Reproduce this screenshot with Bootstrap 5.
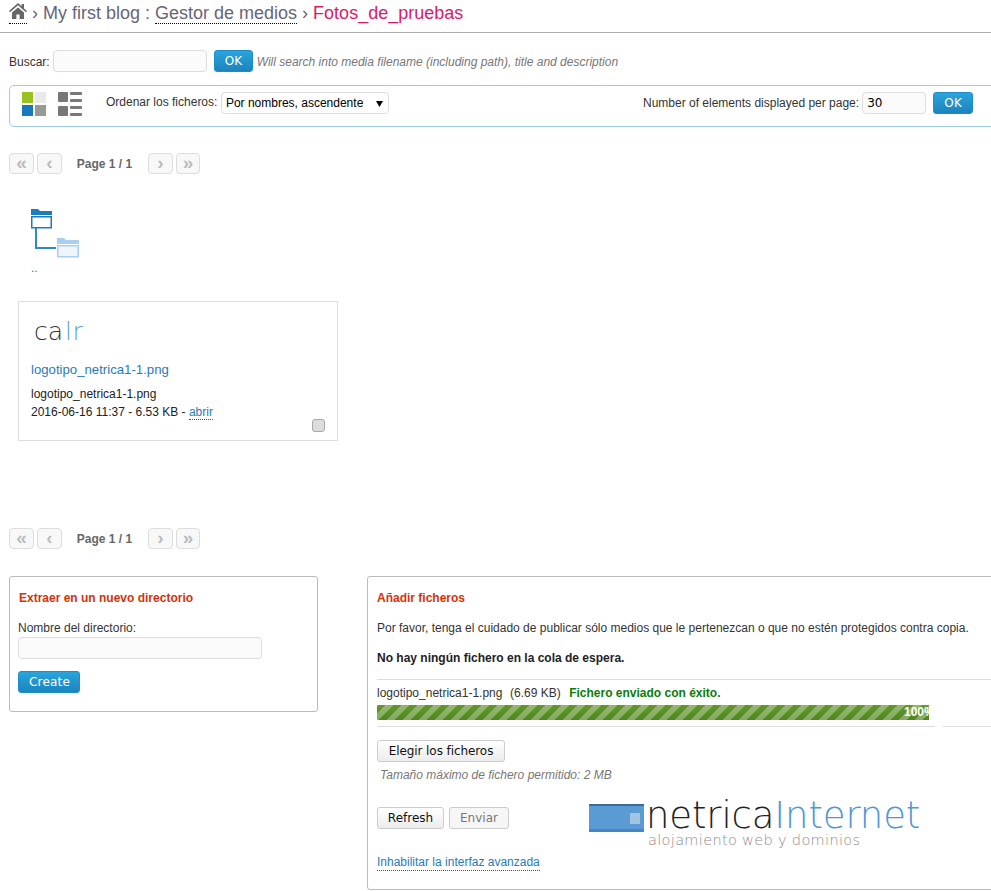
<!DOCTYPE html>
<html lang="es"><head><meta charset="utf-8"><title>Gestor de medios</title>
<link rel="stylesheet" href="https://cdn.jsdelivr.net/npm/bootstrap@5.3.0/dist/css/bootstrap.min.css">
<style>
html,body{overflow:hidden;height:891px}
body{font-family:"Liberation Sans",Arial,sans-serif;font-size:12px;line-height:18px;color:#333;background:#fff}
a{color:#2a7ab8;text-decoration:none}
.crumbs{height:33px;border-bottom:1px solid #aaa;padding:0 9px;font-size:18px;line-height:26px;color:#667;white-space:nowrap;margin:0;font-weight:400;gap:5px}
.crumbs a{color:#667;border-bottom:1px dotted #000;display:inline-block;line-height:26px;height:24px}
.crumbs .current{color:#d81b6a}
.home-ico{display:block;width:18px;height:16px;margin-top:3px}
.searchline{padding:17px 9px 0;height:52px;gap:7px}
.searchline label{margin-right:-4px}
.hint{font-style:italic;color:#777;margin-left:-3px}
.field{height:22px;background:#fbfbfb;border:1px solid #ddd;border-radius:4px;padding:1px 4px;font-family:"DejaVu Sans",sans-serif;font-size:12px;color:#000;outline:0}
.btn-ok{height:22px;padding:0 10px;background:linear-gradient(#2aa4dd,#1b84bd);border:1px solid #1d8fc8;border-radius:3px;color:#fff;font-family:"DejaVu Sans",sans-serif;font-size:12px;line-height:19px;letter-spacing:.2px}
.btn-ok:hover{color:#fff;background:#1b84bd}
.toolbar{margin-left:9px;width:1100px;height:42px;border:1px solid #9ecbea;border-radius:5px 0 0 5px;padding:0 0 4px 12px}
.tool-right{width:345px;position:absolute;left:643px;top:92px;gap:3px;white-space:nowrap}
.sortsel{height:22px;width:168px;border:1px solid #ddd;border-radius:4px;background:#fff url("data:image/svg+xml,%3Csvg xmlns='http://www.w3.org/2000/svg' width='7' height='6'%3E%3Cpath d='M0 0h7L3.5 6z'/%3E%3C/svg%3E") no-repeat 154px 8px;padding:0 0 0 3.5px;font-size:12px;color:#000;margin-bottom:2px;margin-left:1px;appearance:none}
.sort-label{margin-left:23px;margin-right:3px;margin-bottom:4px}
.pager{padding-left:9px;height:21px}
.pg{width:25px;height:21px;border:1px solid #ddd;border-radius:4px;background:#f8f8f8;color:#bbb;font-weight:700;font-size:19px;line-height:15px;text-align:center;margin-right:3px;padding:0 0 3px}
.pg:last-child{width:24px}
.pgtext{font-weight:700;color:#666;width:81px;text-align:center;margin-right:3px;margin-left:-1px}
.folder-up{margin:35px 0 0 31px;height:69px}
.folder-up svg{display:block}
.folder-up a{font-size:12px;display:block;line-height:16px;margin-top:1px}
.filebox{margin:23px 0 0 18px;width:320px;height:140px;border:1px solid #ddd;padding:0 12px;position:relative;color:#222}
.thumb{font-family:"DejaVu Sans",sans-serif;font-weight:200;font-size:25px;line-height:30px;height:46px;padding:15px 0 0 3px;color:#333}
.thumb span{color:#5a9fd6;letter-spacing:.5px;margin-left:2px}
.filelink{font-size:13.2px;line-height:20px;margin-top:12px;display:block}
.filemeta{margin-top:5px;line-height:18px}
.dot{border-bottom:1px dotted #555}
.tick{position:absolute;right:12px;bottom:8px;width:13px;height:13px;margin:0;background:#ddd;border:1px solid #aaa;border-radius:3px;appearance:none}
.pager2{margin-top:87px}
.panels{margin-top:27px;position:relative}
.panel-left{margin-left:9px;width:309px;height:136px;border:1px solid #bbb;border-radius:3px;padding:12px 8px;flex:none}
.panel-right{margin-left:49px;width:700px;height:314px;border:1px solid #bbb;border-radius:3px 0 0 3px;padding:12px 9px;flex:none;position:relative}
.ptitle{color:#d4330a;font-weight:700;line-height:18px;margin:0}
.nudge{margin-left:1px}
.wide{width:244px;display:block}
.btn-plain{height:22px;padding:0;background:linear-gradient(#fff,#ececec);border:1px solid #ccc;border-radius:3px;color:#111;font-family:"DejaVu Sans",sans-serif;font-size:12px;line-height:19px;white-space:nowrap}
.btn-plain.off{background:#f6f6f6;color:#777}
.btn-choose{letter-spacing:-.08px}
.rule{border-top:1px solid #ddd;margin:0;opacity:1}
.barwrap{width:552px;height:15px;background:transparent;border-radius:2px 0 0 2px;font-size:12px}
.barfill{width:100%;background-color:#5a8f26;background-image:linear-gradient(-45deg,rgba(255,255,255,.3) 25%,transparent 25%,transparent 50%,rgba(255,255,255,.3) 50%,rgba(255,255,255,.3) 75%,transparent 75%),linear-gradient(#649a2d,#4f8420);background-size:16px 16px,100% 100%;color:#fff;font-weight:700;text-align:left;overflow:hidden;line-height:15px;white-space:nowrap;display:block;height:15px;padding-left:527px}
.ok-msg{color:#0a7d0a;font-weight:700;margin-left:5px}
.brand{position:absolute;left:221px;top:226px;width:340px;height:50px}
.brand-block{position:absolute;left:0;top:1px;width:55px;height:28px;background:#5b9bd3;border-top:2px solid #3c6d99;border-bottom:3px solid #4487c4}
.brand-block i{position:absolute;right:4px;top:7px;width:10px;height:11px;background:#a2c4e2}
.brand-name{position:absolute;left:57px;top:-7px;font-family:"DejaVu Sans",sans-serif;font-weight:200;font-size:37px;line-height:40px;color:#222;white-space:nowrap;letter-spacing:-.13px}
.brand-name span{color:#4f97d6}
.brand-sub{position:absolute;left:59px;top:29px;font-family:"DejaVu Sans",sans-serif;font-weight:200;font-size:14.5px;line-height:16px;color:#8c8c8c;white-space:nowrap;letter-spacing:.33px}
</style></head>
<body>
<h1 class="crumbs d-flex align-items-start">
<a href="#"><svg class="home-ico" viewBox="0 0 18 16"><path fill="#666" d="M9 0 0 8l1 1.2L9 2.3l8 6.9L18 8l-3-2.6V1h-2.4v2.3zM3 9.6V16h4.4v-4.6h3.2V16H15V9.6L9 4.4z"/></svg></a>
<span>›</span><span>My first blog :</span><a href="#">Gestor de medios</a><span>›</span><span class="current">Fotos_de_pruebas</span>
</h1>
<form class="searchline d-flex align-items-start">
<label class="lh-lg">Buscar:</label><input class="field" style="width:154px" type="text"><button type="button" class="btn btn-ok" style="width:39px">OK</button><span class="hint lh-lg">Will search into media filename (including path), title and description</span>
</form>
<div class="toolbar d-flex align-items-center">
<svg width="61" height="24" viewBox="0 0 61 24"><rect width="11" height="11" fill="#9ac21f"/><rect x="13" width="11" height="11" fill="#eaeaea"/><rect y="13" width="11" height="11" fill="#1679b9"/><rect x="13" y="13" width="11" height="11" fill="#999"/><g fill="#777"><rect x="36" width="10" height="10" rx="1"/><rect x="48" width="12" height="3" rx="1"/><rect x="48" y="7" width="12" height="3" rx="1"/><rect x="36" y="14" width="10" height="10" rx="1"/><rect x="48" y="14" width="12" height="3" rx="1"/><rect x="48" y="21" width="12" height="3" rx="1"/></g></svg>
<span class="sort-label">Ordenar los ficheros:</span>
<select class="sortsel"><option>Por nombres, ascendente</option></select>
</div>
<div class="tool-right d-flex align-items-center">
<span>Number of elements displayed per page:</span><input class="field" style="width:64px" value="30"><button type="button" class="btn btn-ok" style="width:40px;margin-left:4px">OK</button>
</div>
<div class="pager d-flex align-items-center" style="margin-top:26px">
<button class="pg">«</button><button class="pg">‹</button><span class="pgtext">Page 1 / 1</span><button class="pg">›</button><button class="pg">»</button>
</div>
<div class="folder-up">
<svg width="50" height="50" viewBox="0 0 50 50"><path d="M0 0h7l2 2h12v4H0z" fill="#1b7dbe"/><rect x=".75" y="7.75" width="19.5" height="11" fill="#fff" stroke="#1b7dbe" stroke-width="1.5"/><path d="M5 19v20h20" fill="none" stroke="#2f8ac7" stroke-width="2"/><path d="M26 29h7l2 2h13v4H26z" fill="#a8cfee"/><rect x="26.75" y="36.75" width="20.5" height="11" fill="#eef6fc" stroke="#a8cfee" stroke-width="1.5"/></svg>
<a href="#">..</a>
</div>
<div class="filebox">
<div class="thumb">ca<span>lr</span></div>
<a class="filelink" href="#">logotipo_netrica1-1.png</a>
<div class="filemeta">logotipo_netrica1-1.png<br>2016-06-16 11:37 - 6.53 KB - <a class="dot" href="#">abrir</a></div>
<input class="tick" type="checkbox">
</div>
<div class="pager pager2 d-flex align-items-center">
<button class="pg">«</button><button class="pg">‹</button><span class="pgtext">Page 1 / 1</span><button class="pg">›</button><button class="pg">»</button>
</div>
<div class="panels d-flex align-items-start">
<div class="panel-left">
<p class="ptitle nudge">Extraer en un nuevo directorio</p>
<div style="margin-top:12px">Nombre del directorio:</div>
<input class="field wide" type="text">
<button type="button" class="btn btn-ok" style="margin-top:12px;width:62px">Create</button>
</div>
<div class="panel-right">
<p class="ptitle">Añadir ficheros</p>
<div style="margin-top:12px">Por favor, tenga el cuidado de publicar sólo medios que le pertenezcan o que no estén protegidos contra copia.</div>
<div class="fw-bold" style="margin-top:12px;color:#222">No hay ningún fichero en la cola de espera.</div>
<hr class="rule" style="margin-top:12px;margin-right:-10px">
<div style="margin-top:4px;white-space:pre">logotipo_netrica1-1.png  <span class="nudge">(6.69 KB)</span> <span class="ok-msg">Fichero enviado con éxito.</span></div>
<div class="progress barwrap" style="margin-top:3px"><div class="progress-bar barfill">100%</div></div>
<div class="d-flex gap-2" style="margin-top:6px"><hr class="rule" style="width:558px"><hr class="rule flex-grow-1"></div>
<button type="button" class="btn btn-plain btn-choose d-block" style="margin-top:13px;width:128px">Elegir los ficheros</button>
<div class="fst-italic" style="color:#777;margin:4px 0 0 3px">Tamaño máximo de fichero permitido: 2 MB</div>
<div class="d-flex gap-1" style="margin-top:23px"><button type="button" class="btn btn-plain" style="width:67px">Refresh</button><button type="button" class="btn btn-plain off" style="width:60px;margin-left:1px">Enviar</button></div>
<div class="brand"><div class="brand-block"><i></i></div><div class="brand-name">netrica<span>Internet</span></div><div class="brand-sub">alojamiento web y dominios</div></div>
<a class="dot d-inline-block" href="#" style="margin-top:25px;line-height:16px">Inhabilitar la interfaz avanzada</a>
</div>
</div>
</body></html>
